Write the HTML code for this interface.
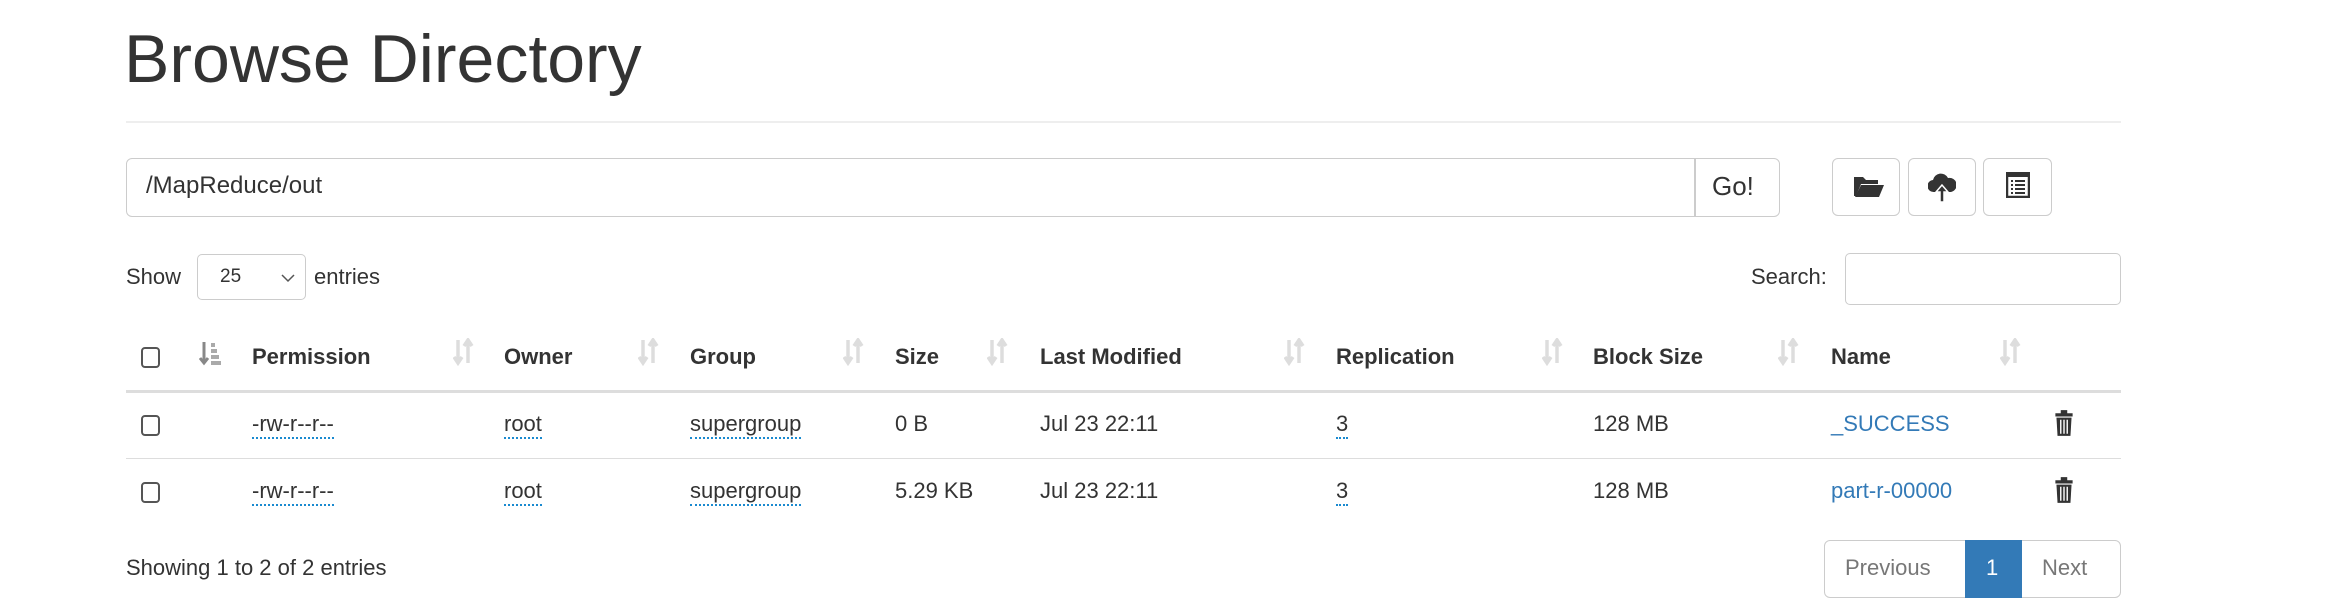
<!DOCTYPE html>
<html><head><meta charset="utf-8"><style>
body{margin:0;width:2352px;height:610px;background:#fff;font-family:"Liberation Sans",sans-serif;color:#333;position:relative;overflow:hidden}
.a{position:absolute;white-space:nowrap}
h1{position:absolute;left:124px;top:16px;margin:0;font-weight:400;font-size:68px;line-height:86px;color:#333}
.box{position:absolute;border:1px solid #ccc;border-radius:6px;box-sizing:border-box}
.th{font-weight:bold;font-size:22px;top:344px}
.td{font-size:22px}
.dot{border-bottom:2px dotted #1a8ad0;padding-bottom:1px}
.cb{position:absolute;width:19px;height:21px;border:2px solid #555;border-radius:4px;box-sizing:border-box}
.sort{position:absolute;top:338px}
.lnk{color:#337ab7}
</style></head><body>
<h1>Browse Directory</h1>
<div class="a" style="left:126px;top:121px;width:1995px;height:2px;background:#eee"></div>
<div class="box" style="left:126px;top:158px;width:1570px;height:59px;border-radius:6px 0 0 6px"></div>
<div class="a td" style="left:146px;top:172px;font-size:24px">/MapReduce/out</div>
<div class="box" style="left:1694px;top:158px;width:86px;height:59px;border-radius:0 6px 6px 0"></div>
<div class="a" style="left:1712px;top:171px;font-size:26px">Go!</div>
<div class="box" style="left:1832px;top:158px;width:68px;height:58px"></div>
<div class="box" style="left:1908px;top:158px;width:68px;height:58px"></div>
<div class="box" style="left:1983px;top:158px;width:69px;height:58px"></div>
<svg class="a" style="left:1853px;top:174px" width="32" height="26" viewBox="0 0 32 26"><path d="M1 3h9l3 3h12v4H8L3 22H1z" fill="#333"/><path d="M8 11h23l-5 12H2z" fill="#333"/></svg>
<svg class="a" style="left:1928px;top:172px" width="28" height="30" viewBox="0 0 28 30"><path d="M6 20a6 6 0 0 1-1-12 8 8 0 0 1 15-2 7 7 0 0 1 3 14h-5l-4-5-4 5z" fill="#333"/><path d="M14 13l-6 7h4v10h4V20h4z" fill="#333" stroke="#fff" stroke-width="1.5"/></svg>
<svg class="a" style="left:2006px;top:172px" width="24" height="26" viewBox="0 0 24 26"><rect x="1" y="1" width="22" height="24" fill="none" stroke="#333" stroke-width="2.5"/><rect x="1" y="1" width="22" height="4" fill="#333"/><g fill="#333"><rect x="5" y="8" width="2" height="2"/><rect x="9" y="8" width="10" height="2"/><rect x="5" y="12" width="2" height="2"/><rect x="9" y="12" width="10" height="2"/><rect x="5" y="16" width="2" height="2"/><rect x="9" y="16" width="10" height="2"/><rect x="5" y="20" width="2" height="2"/><rect x="9" y="20" width="10" height="2"/></g></svg>
<div class="a" style="left:126px;top:264px;font-size:22px">Show</div>
<div class="box" style="left:197px;top:254px;width:109px;height:46px;border-radius:5px"></div>
<div class="a" style="left:220px;top:266px;font-size:19px">25</div>
<svg class="a" style="left:281px;top:274px" width="14" height="9" viewBox="0 0 14 9"><path d="M1 1l6 6 6-6" fill="none" stroke="#555" stroke-width="1.5"/></svg>
<div class="a" style="left:314px;top:264px;font-size:22px">entries</div>
<div class="a" style="left:1751px;top:264px;font-size:22px">Search:</div>
<div class="box" style="left:1845px;top:253px;width:276px;height:52px;border-radius:5px"></div>
<div class="cb" style="left:141px;top:347px"></div>
<svg class="a" style="left:199px;top:341px" width="24" height="26" viewBox="0 0 24 26"><path d="M5 1v20M1 17l4 5 4-5" fill="none" stroke="#888" stroke-width="3"/><g fill="#aaa"><rect x="12" y="2" width="4" height="4"/><rect x="12" y="8" width="6" height="4"/><rect x="12" y="14" width="8" height="4"/><rect x="12" y="20" width="10" height="4"/></g></svg>
<div class="a th" style="left:252px">Permission</div>
<div class="a th" style="left:504px">Owner</div>
<div class="a th" style="left:690px">Group</div>
<div class="a th" style="left:895px">Size</div>
<div class="a th" style="left:1040px">Last Modified</div>
<div class="a th" style="left:1336px">Replication</div>
<div class="a th" style="left:1593px">Block Size</div>
<div class="a th" style="left:1831px">Name</div>
<svg width="0" height="0" style="position:absolute"><defs><g id="s"><path d="M5 2v22M1 19l4 6 4-6" fill="none" stroke="#ddd" stroke-width="3.5"/><path d="M15 25V3M11 8l4-6 4 6" fill="none" stroke="#ddd" stroke-width="3.5"/></g></defs></svg>
<svg class="sort" style="left:453px" width="22" height="28"><use href="#s"/></svg>
<svg class="sort" style="left:638px" width="22" height="28"><use href="#s"/></svg>
<svg class="sort" style="left:843px" width="22" height="28"><use href="#s"/></svg>
<svg class="sort" style="left:987px" width="22" height="28"><use href="#s"/></svg>
<svg class="sort" style="left:1284px" width="22" height="28"><use href="#s"/></svg>
<svg class="sort" style="left:1542px" width="22" height="28"><use href="#s"/></svg>
<svg class="sort" style="left:1778px" width="22" height="28"><use href="#s"/></svg>
<svg class="sort" style="left:2000px" width="22" height="28"><use href="#s"/></svg>
<div class="a" style="left:126px;top:390px;width:1995px;height:3px;background:#ddd"></div>
<div class="a" style="left:126px;top:458px;width:1995px;height:1px;background:#ddd"></div>

<div class="cb" style="left:141px;top:415px"></div>
<div class="a td" style="left:252px;top:411px"><span class="dot">-rw-r--r--</span></div>
<div class="a td" style="left:504px;top:411px"><span class="dot">root</span></div>
<div class="a td" style="left:690px;top:411px"><span class="dot">supergroup</span></div>
<div class="a td" style="left:895px;top:411px">0 B</div>
<div class="a td" style="left:1040px;top:411px">Jul 23 22:11</div>
<div class="a td" style="left:1336px;top:411px"><span class="dot">3</span></div>
<div class="a td" style="left:1593px;top:411px">128 MB</div>
<div class="a td lnk" style="left:1831px;top:411px">_SUCCESS</div>
<svg class="a" style="left:2054px;top:409px" width="20" height="28" viewBox="0 0 18 26"><path d="M6 1h6v3h5v3H1V4h5z" fill="#333"/><path d="M2 8h14l-1 17H3z" fill="#333"/><path d="M6 10v13M9 10v13M12 10v13" stroke="#fff" stroke-width="1.3"/></svg>

<div class="cb" style="left:141px;top:482px"></div>
<div class="a td" style="left:252px;top:478px"><span class="dot">-rw-r--r--</span></div>
<div class="a td" style="left:504px;top:478px"><span class="dot">root</span></div>
<div class="a td" style="left:690px;top:478px"><span class="dot">supergroup</span></div>
<div class="a td" style="left:895px;top:478px">5.29 KB</div>
<div class="a td" style="left:1040px;top:478px">Jul 23 22:11</div>
<div class="a td" style="left:1336px;top:478px"><span class="dot">3</span></div>
<div class="a td" style="left:1593px;top:478px">128 MB</div>
<div class="a td lnk" style="left:1831px;top:478px">part-r-00000</div>
<svg class="a" style="left:2054px;top:476px" width="20" height="28" viewBox="0 0 18 26"><path d="M6 1h6v3h5v3H1V4h5z" fill="#333"/><path d="M2 8h14l-1 17H3z" fill="#333"/><path d="M6 10v13M9 10v13M12 10v13" stroke="#fff" stroke-width="1.3"/></svg>

<div class="a td" style="left:126px;top:555px">Showing 1 to 2 of 2 entries</div>
<div class="box" style="left:1824px;top:540px;width:297px;height:58px"></div>
<div class="a" style="left:1965px;top:540px;width:57px;height:58px;background:#337ab7"></div>
<div class="a td" style="left:1845px;top:555px;color:#777">Previous</div>
<div class="a td" style="left:1986px;top:555px;color:#fff">1</div>
<div class="a td" style="left:2042px;top:555px;color:#777">Next</div>
</body></html>
